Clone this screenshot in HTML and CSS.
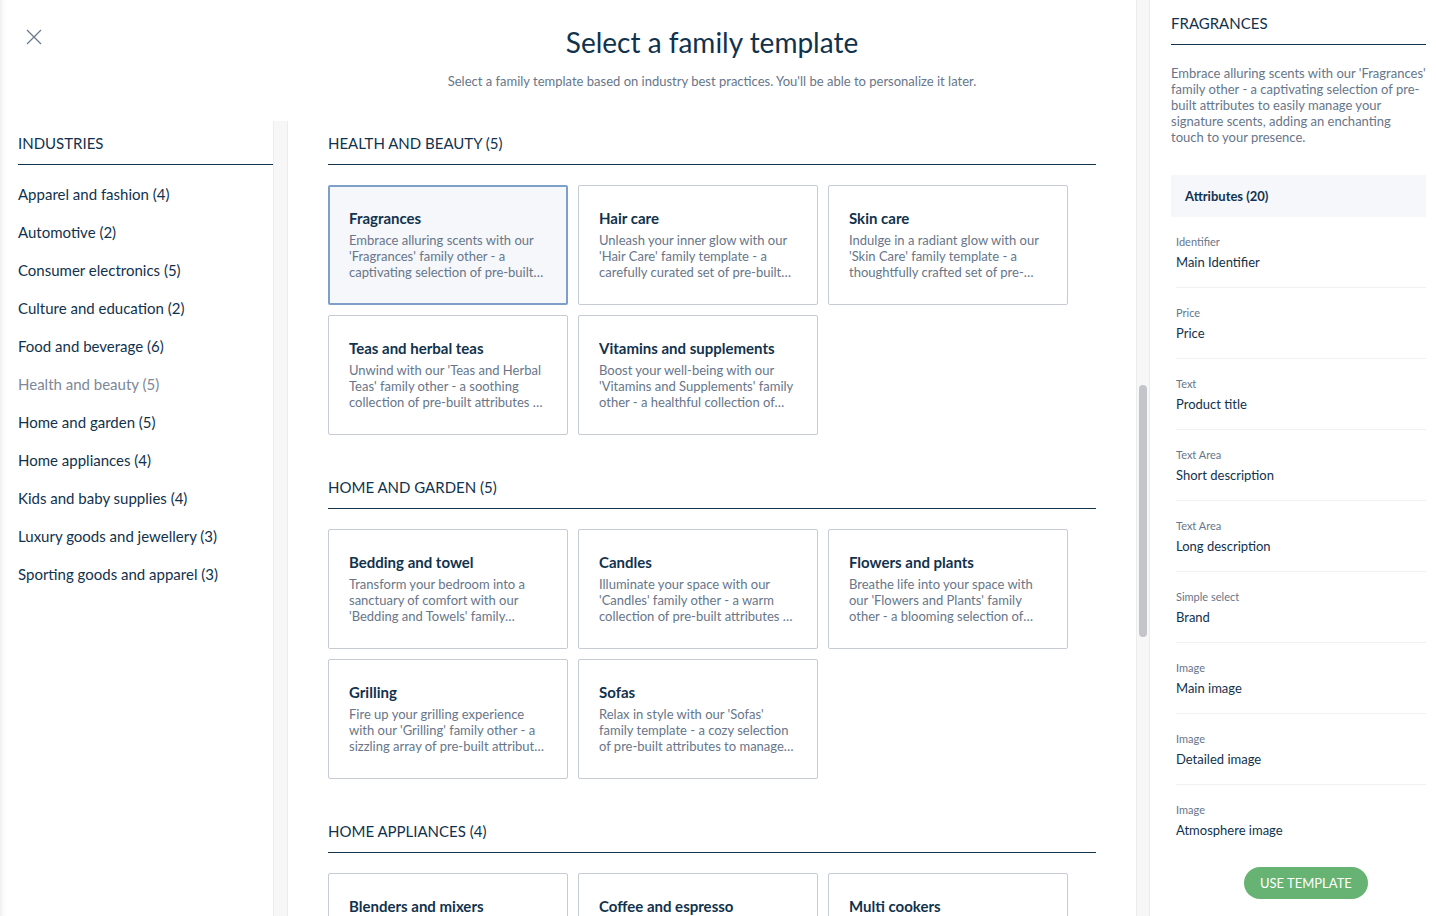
FILE: index.html
```html
<!DOCTYPE html>
<html lang="en">
<head>
<meta charset="utf-8">
<title>Select a family template</title>
<link rel="stylesheet" href="styles.css">
</head>
<body>
<div class="app">
  <div class="main">
    <button class="close" aria-label="Close">
      <svg width="16" height="16" viewBox="0 0 16 16"><path d="M1 1 L15 15 M15 1 L1 15" stroke="#67768a" stroke-width="1.2" fill="none"/></svg>
    </button>
    <header class="header">
      <h1 class="title">Select a family template</h1>
      <p class="subtitle">Select a family template based on industry best practices. You'll be able to personalize it later.</p>
    </header>
    <div class="body">
      <nav class="sidebar">
        <h2 class="section-title">INDUSTRIES</h2>
        <ul class="industries">
          <li>Apparel and fashion (4)</li>
          <li>Automotive (2)</li>
          <li>Consumer electronics (5)</li>
          <li>Culture and education (2)</li>
          <li>Food and beverage (6)</li>
          <li class="active">Health and beauty (5)</li>
          <li>Home and garden (5)</li>
          <li>Home appliances (4)</li>
          <li>Kids and baby supplies (4)</li>
          <li>Luxury goods and jewellery (3)</li>
          <li>Sporting goods and apparel (3)</li>
        </ul>
      </nav>
      <div class="track track-side"></div>
      <div class="content">
        <section class="section">
          <h2 class="section-title">HEALTH AND BEAUTY (5)</h2>
          <div class="cards">
            <div class="card selected"><div class="card-title">Fragrances</div><div class="card-desc">Embrace alluring scents with our 'Fragrances' family other - a captivating selection of pre-built attributes to easily manage your signature scents.</div></div>
            <div class="card"><div class="card-title">Hair care</div><div class="card-desc">Unleash your inner glow with our 'Hair Care' family template - a carefully curated set of pre-built attributes to manage your products.</div></div>
            <div class="card"><div class="card-title">Skin care</div><div class="card-desc">Indulge in a radiant glow with our 'Skin Care' family template - a thoughtfully crafted set of pre-built attributes.</div></div>
            <div class="card"><div class="card-title">Teas and herbal teas</div><div class="card-desc">Unwind with our 'Teas and Herbal Teas' family other - a soothing collection of pre-built attributes to manage your teas.</div></div>
            <div class="card"><div class="card-title">Vitamins and supplements</div><div class="card-desc">Boost your well-being with our 'Vitamins and Supplements' family other - a healthful collection of pre-built attributes.</div></div>
          </div>
        </section>
        <section class="section">
          <h2 class="section-title">HOME AND GARDEN (5)</h2>
          <div class="cards">
            <div class="card"><div class="card-title">Bedding and towel</div><div class="card-desc">Transform your bedroom into a sanctuary of comfort with our 'Bedding and Towels' family template of pre-built attributes.</div></div>
            <div class="card"><div class="card-title">Candles</div><div class="card-desc">Illuminate your space with our 'Candles' family other - a warm collection of pre-built attributes to manage your candles.</div></div>
            <div class="card"><div class="card-title">Flowers and plants</div><div class="card-desc">Breathe life into your space with our 'Flowers and Plants' family other - a blooming selection of pre-built attributes.</div></div>
            <div class="card"><div class="card-title">Grilling</div><div class="card-desc card-desc--wide">Fire up your grilling experience with our 'Grilling' family other - a sizzling array of pre-built attributes to manage your grills.</div></div>
            <div class="card"><div class="card-title">Sofas</div><div class="card-desc">Relax in style with our 'Sofas' family template - a cozy selection of pre-built attributes to manage your sofas.</div></div>
          </div>
        </section>
        <section class="section">
          <h2 class="section-title">HOME APPLIANCES (4)</h2>
          <div class="cards">
            <div class="card"><div class="card-title">Blenders and mixers</div><div class="card-desc">Blend and mix with ease with our 'Blenders and Mixers' family template of pre-built attributes.</div></div>
            <div class="card"><div class="card-title">Coffee and espresso</div><div class="card-desc">Brew perfection with our 'Coffee and Espresso' family template of pre-built attributes.</div></div>
            <div class="card"><div class="card-title">Multi cookers</div><div class="card-desc">Cook anything with our 'Multi Cookers' family template of pre-built attributes.</div></div>
            <div class="card"><div class="card-title">Vacuum cleaners</div><div class="card-desc">Keep it clean with our 'Vacuum Cleaners' family template of pre-built attributes.</div></div>
          </div>
        </section>
      </div>
    </div>
  </div>
  <div class="track track-main"><div class="thumb-spacer"></div><div class="thumb"></div></div>
  <aside class="panel">
    <h2 class="section-title">FRAGRANCES</h2>
    <p class="panel-desc">Embrace alluring scents with our 'Fragrances' family other - a captivating selection of pre-built attributes to easily manage your signature scents, adding an enchanting touch to your presence.</p>
    <div class="attr-head">Attributes (20)</div>
    <ul class="attrs">
      <li><span class="attr-type">Identifier</span><span class="attr-name">Main Identifier</span></li>
      <li><span class="attr-type">Price</span><span class="attr-name">Price</span></li>
      <li><span class="attr-type">Text</span><span class="attr-name">Product title</span></li>
      <li><span class="attr-type">Text Area</span><span class="attr-name">Short description</span></li>
      <li><span class="attr-type">Text Area</span><span class="attr-name">Long description</span></li>
      <li><span class="attr-type">Simple select</span><span class="attr-name">Brand</span></li>
      <li><span class="attr-type">Image</span><span class="attr-name">Main image</span></li>
      <li><span class="attr-type">Image</span><span class="attr-name">Detailed image</span></li>
      <li><span class="attr-type">Image</span><span class="attr-name">Atmosphere image</span></li>
    </ul>
    <button class="use-btn">USE TEMPLATE</button>
  </aside>
</div>
</body>
</html>
```

FILE: styles.css
```css
* { box-sizing: border-box; }
html, body {
  margin: 0;
  padding: 0;
  width: 1436px;
  height: 916px;
  overflow: hidden;
  background: #ffffff;
  font-family: Lato, "Noto Sans", sans-serif;
  color: #11324d;
}
h1, h2, p, ul { margin: 0; padding: 0; }
ul { list-style: none; }

.app {
  display: flex;
  height: 916px;
}

.main {
  position: relative;
  width: 1136px;
  display: flex;
  flex-direction: column;
  box-shadow: inset 7px 0 7px -7px rgba(0, 0, 0, 0.12);
}

.close {
  position: absolute;
  left: 26px;
  top: 29px;
  width: 16px;
  height: 16px;
  padding: 0;
  border: 0;
  background: none;
  display: flex;
}

.header {
  height: 121px;
  flex: none;
  padding-left: 288px;
  text-align: center;
}
.title {
  font-size: 28px;
  font-weight: 400;
  line-height: 34px;
  padding-top: 25px;
  color: #11324d;
}
.subtitle {
  font-size: 13px;
  line-height: 16px;
  margin-top: 14px;
  color: #67768a;
}

.body {
  flex: 1;
  display: flex;
  min-height: 0;
  overflow: hidden;
}

.section-title {
  font-size: 15px;
  font-weight: 400;
  line-height: 20px;
  padding: 12px 0 11px;
  border-bottom: 1px solid #11324d;
  color: #11324d;
}

.sidebar {
  width: 273px;
  flex: none;
  padding-left: 18px;
}
.industries {
  margin-top: 10px;
}
.industries li {
  font-size: 15px;
  line-height: 38px;
  color: #11324d;
}
.industries li.active {
  color: #7d8899;
}

.track {
  flex: none;
  width: 14px;
  background: #f7f7f8;
  border-left: 1px solid #ececee;
  border-right: 1px solid #ececee;
}
.track-side {
  width: 15px;
}

.content {
  flex: 1;
  padding: 0 40px;
  overflow: hidden;
}
.section + .section {
  margin-top: 30px;
}
.cards {
  margin-top: 20px;
  display: grid;
  grid-template-columns: repeat(3, 240px);
  grid-auto-rows: 120px;
  gap: 10px;
}
.card {
  border: 1px solid #c7cbd4;
  border-radius: 2px;
  padding: 22px 20px 0 20px;
  background: #ffffff;
}
.card.selected {
  border: 2px solid #7d9fc8;
  background: #f6f7fb;
  padding: 21px 19px 0 19px;
}
.card-title {
  font-size: 15px;
  font-weight: 700;
  line-height: 20px;
  color: #11324d;
}
.card-desc {
  margin-top: 4px;
  font-size: 13px;
  line-height: 16px;
  color: #67768a;
  display: -webkit-box;
  -webkit-box-orient: vertical;
  -webkit-line-clamp: 3;
  overflow: hidden;
}
.card-desc--wide {
  margin-right: -3px;
}

.track-main {
  display: flex;
  flex-direction: column;
  align-items: center;
  border-right: 1px solid #ececee;
}
.thumb-spacer {
  height: 385px;
  flex: none;
}
.thumb {
  width: 8px;
  height: 252px;
  border-radius: 4px;
  background: #c3c5ca;
}

.panel {
  flex: 1;
  padding: 1px 10px 0 21px;
  display: flex;
  flex-direction: column;
  overflow: hidden;
}
.panel-desc {
  margin-top: 20px;
  font-size: 13px;
  line-height: 16px;
  color: #67768a;
}
.attr-head {
  margin-top: 30px;
  height: 42px;
  padding-left: 14px;
  background: #f6f7fb;
  font-size: 13px;
  font-weight: 700;
  line-height: 42px;
  color: #11324d;
}
.attrs li {
  display: flex;
  flex-direction: column;
  margin-left: 5px;
  padding: 18px 0 16px;
  border-bottom: 1px solid #f0f1f3;
}
.attrs li:last-child {
  border-bottom: 0;
}
.attr-type {
  font-size: 11px;
  line-height: 14px;
  color: #67768a;
}
.attr-name {
  margin-top: 4px;
  font-size: 13px;
  line-height: 18px;
  color: #11324d;
}
.use-btn {
  align-self: flex-start;
  margin-left: 73px;
  margin-top: 12px;
  height: 32px;
  padding: 0 16px;
  border: 0;
  border-radius: 16px;
  background: #67b373;
  color: #ffffff;
  font-family: Lato, "Noto Sans", sans-serif;
  font-size: 13px;
  line-height: 32px;
  flex: none;
}
```
